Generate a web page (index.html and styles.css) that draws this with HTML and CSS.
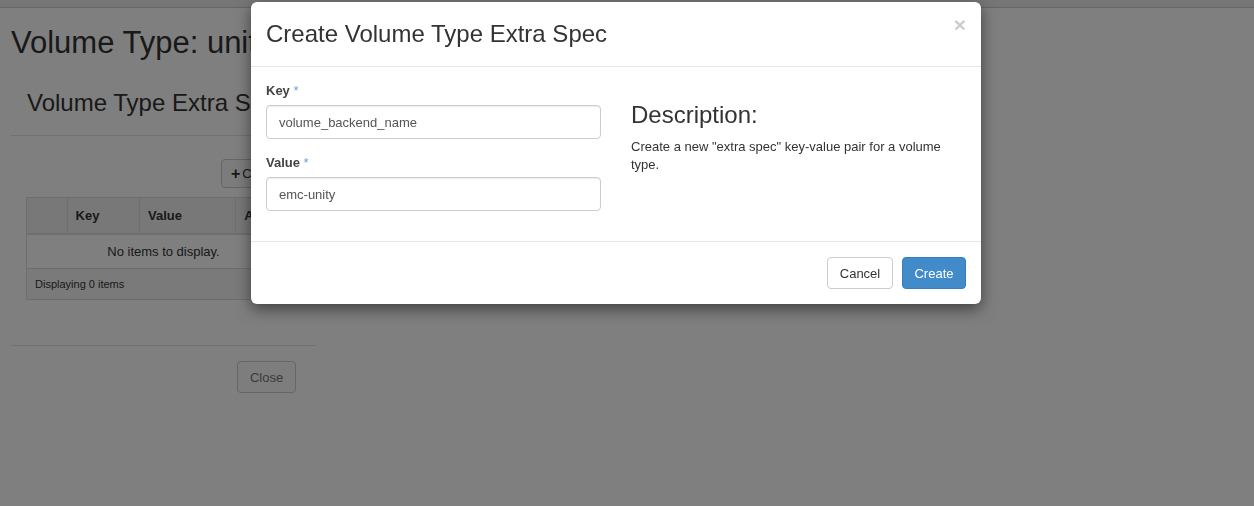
FILE: index.html
```html
<!DOCTYPE html>
<html>
<head>
<meta charset="utf-8">
<link rel="stylesheet" href="styles.css">
</head>
<body>
<div class="topbar"></div>
<main class="content">
  <h1 class="page-title">Volume Type: unity</h1>
  <section class="panel">
    <div class="panel-header">
      <h3 class="panel-title">Volume Type Extra Specs</h3>
    </div>
    <div class="panel-body">
      <div class="table-actions">
        <button class="btn btn-sm"><span class="plus">+</span> Create</button>
      </div>
      <table class="table">
        <thead>
          <tr><th class="col-check"></th><th class="col-key">Key</th><th class="col-value">Value</th><th>Actions</th></tr>
        </thead>
        <tbody>
          <tr><td colspan="4" class="empty">No items to display.</td></tr>
        </tbody>
        <tfoot>
          <tr><td colspan="4" class="foot">Displaying 0 items</td></tr>
        </tfoot>
      </table>
    </div>
    <div class="panel-footer">
      <button class="btn btn-close">Close</button>
    </div>
  </section>
</main>
<div class="backdrop"></div>
<div class="modal">
  <div class="modal-header">
    <h3 class="modal-title">Create Volume Type Extra Spec</h3>
    <span class="close">&times;</span>
  </div>
  <div class="modal-body">
    <div class="col">
      <div class="form-group">
        <label class="label">Key <span class="req">*</span></label>
        <div class="input">volume_backend_name</div>
      </div>
      <div class="form-group">
        <label class="label">Value <span class="req">*</span></label>
        <div class="input">emc-unity</div>
      </div>
    </div>
    <div class="col">
      <h3 class="desc-title">Description:</h3>
      <p class="desc">Create a new "extra spec" key-value pair for a volume type.</p>
    </div>
  </div>
  <div class="modal-footer">
    <button class="btn btn-default">Cancel</button>
    <button class="btn btn-primary">Create</button>
  </div>
</div>
</body>
</html>
```

FILE: styles.css
```css
* { box-sizing: border-box; }
html, body { margin: 0; padding: 0; }
body {
  font-family: "Liberation Sans", Arial, sans-serif;
  font-size: 13px;
  color: #333;
  background: #fff;
  width: 1254px;
  height: 506px;
  overflow: hidden;
}
.topbar {
  height: 8px;
  background: #ececec;
  border-bottom: 1px solid #cccccc;
}
.content { padding: 0 11px; }
.page-title {
  margin: 0;
  padding-top: 17px;
  font-size: 31px;
  font-weight: normal;
  line-height: 36px;
  color: #333;
  white-space: nowrap;
}
.panel { width: 305px; }
.panel-header {
  padding: 29px 15px 19px 16px;
  border-bottom: 1px solid #e5e5e5;
}
.panel-title {
  margin: 0;
  font-size: 24px;
  font-weight: normal;
  line-height: 26px;
  white-space: nowrap;
}
.panel-body { padding: 23px 15px 45px 15px; }
.table-actions { padding-left: 195px; margin-bottom: 9px; height: 29px; }
.btn {
  font-family: "Liberation Sans", Arial, sans-serif;
  display: inline-flex;
  align-items: center;
  justify-content: center;
  border: 1px solid #ccc;
  border-radius: 4px;
  background: #fff;
  color: #333;
  font-size: 13px;
  padding: 0 12px;
  cursor: pointer;
}
.btn-sm { height: 29px; padding: 0 9px; background: #f9f9f9; white-space: nowrap; }
.plus { font-weight: bold; font-size: 16px; margin-right: 2px; }
.table {
  width: 275px;
  border-collapse: collapse;
  border: 1px solid #ddd;
}
.table th {
  background: #f1f1f1;
  height: 36px;
  text-align: left;
  font-weight: bold;
  padding: 0 8px;
  border: 1px solid #ddd;
  border-bottom: 2px solid #ddd;
}
.col-check { width: 41px; }
.col-key { width: 73px; }
.col-value { width: 97px; }
.empty {
  height: 35px;
  text-align: center;
  border-bottom: 1px solid #ddd;
}
.foot {
  height: 31px;
  background: #f5f5f5;
  font-size: 11px;
  padding: 0 8px;
}
.panel-footer {
  border-top: 1px solid #e5e5e5;
  padding: 15px 20px 15px 15px;
  display: flex;
  justify-content: flex-end;
}
.btn-close { height: 32px; width: 59px; color: #777; background: #fafafa; }
.backdrop {
  position: fixed;
  inset: 0;
  background: rgba(0, 0, 0, 0.5);
}
.modal {
  position: absolute;
  left: 251px;
  top: 2px;
  width: 730px;
  background: #fff;
  border-radius: 6px;
  box-shadow: 0 5px 15px rgba(0, 0, 0, 0.5);
}
.modal-header {
  padding: 15px;
  border-bottom: 1px solid #e5e5e5;
  display: flex;
  justify-content: space-between;
  align-items: flex-start;
}
.modal-title {
  margin: 0;
  font-size: 24px;
  font-weight: normal;
  line-height: 34px;
  color: #333;
}
.close {
  font-size: 21px;
  font-weight: bold;
  line-height: 1;
  color: #000;
  opacity: 0.2;
  margin-top: -3px;
  margin-right: 0;
}
.modal-body {
  padding: 15px;
  display: flex;
}
.col { width: 350px; }
.col:first-child { padding-right: 15px; }
.col:last-child { padding-left: 15px; }
.form-group { margin-bottom: 15px; }
.label {
  display: block;
  font-weight: bold;
  line-height: 18px;
  margin-bottom: 5px;
  font-size: 13px;
  color: #444;
}
.req { color: #6fa1d8; font-weight: normal; }
.input {
  height: 34px;
  border: 1px solid #ccc;
  border-radius: 4px;
  padding: 0 12px;
  display: flex;
  align-items: center;
  color: #555;
  font-size: 13px;
  box-shadow: inset 0 1px 1px rgba(0,0,0,.075);
}
.desc-title {
  margin: 20px 0 10px 0;
  font-size: 24px;
  font-weight: normal;
  line-height: 26px;
  color: #333;
}
.desc {
  margin: 0;
  font-size: 13px;
  line-height: 18px;
  color: #333;
}
.modal-footer {
  padding: 15px;
  border-top: 1px solid #e5e5e5;
  display: flex;
  justify-content: flex-end;
  gap: 9px;
}
.btn-default { height: 32px; width: 66px; }
.btn-primary {
  height: 32px;
  width: 64px;
  background: #428bca;
  border-color: #357ebd;
  color: #fff;
}
```
